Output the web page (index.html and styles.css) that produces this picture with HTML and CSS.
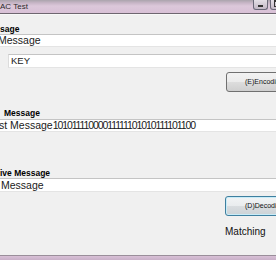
FILE: index.html
```html
<!DOCTYPE html>
<html>
<head>
<meta charset="utf-8">
<link rel="stylesheet" href="styles.css">
</head>
<body>
<div class="window">
  <div class="titlebar">
    <span class="title">AC Test</span>
    <div class="caption">
      <span class="cbtn min"></span>
      <span class="cbtn max"></span>
    </div>
  </div>
  <div class="client">
    <div class="label l1">sage</div>
    <div class="tb tb1">Message</div>
    <div class="tb key">KEY</div>
    <div class="btn enc">(E)Encoding</div>
    <div class="label l2">Message</div>
    <div class="tb tb3">st Message<span class="bits">10101111000011111101010111101100</span></div>
    <div class="label l3">ive Message</div>
    <div class="tb tb4">Message</div>
    <div class="btn dec">(D)Decoding</div>
    <div class="status">Matching</div>
  </div>
  <div class="frame-bottom"></div>
</div>
</body>
</html>
```
FILE: styles.css
```css
html, body {
  margin: 0;
  padding: 0;
}
body {
  width: 276px;
  height: 260px;
  overflow: hidden;
  background: #f0f0f0;
  font-family: "Liberation Sans", Arial, sans-serif;
  color: #111;
}
.window {
  display: flex;
  flex-direction: column;
  height: 260px;
}
.titlebar {
  height: 13px;
  flex: none;
  border-bottom: 1px solid #6e6670;
  background: linear-gradient(#aaa4ac 0, #c8b6c7 3px, #dcc8da 6px, #d8c0d6 100%);
  display: flex;
  justify-content: space-between;
  align-items: flex-start;
}
.title {
  font-size: 8px;
  line-height: 14px;
  color: #2a2a2a;
}
.caption {
  display: flex;
  gap: 2px;
  margin-right: -8px;
}
.cbtn {
  height: 10px;
  box-sizing: border-box;
  border: 1px solid #6a6878;
  border-top: 0;
  border-radius: 0 0 3px 3px;
  background: linear-gradient(#e4dfe6, #c3b8c6);
  display: flex;
  justify-content: center;
  align-items: flex-end;
}
.min {
  width: 15px;
  padding-bottom: 2px;
}
.min::after {
  content: "";
  width: 5px;
  height: 2px;
  background: #333;
}
.max {
  width: 14px;
  justify-content: flex-start;
  padding: 0 0 2px 3px;
}
.max::after {
  content: "";
  width: 5px;
  height: 4px;
  border: 1px solid #333;
  border-top-width: 2px;
}
.client {
  flex: 1;
  display: flex;
  flex-direction: column;
  overflow: hidden;
  background: #f0f0f0;
  border-top: 1px solid #f8f8f8;
}
.label {
  font-weight: bold;
  font-size: 8.5px;
  line-height: 10px;
  color: #000;
  white-space: nowrap;
}
.l1 { margin-top: 9px; }
.l2 { margin-top: 16px; padding-left: 4px; }
.l3 { margin-top: 36px; }
.tb {
  height: 13px;
  box-sizing: border-box;
  background: #fff;
  border-top: 1px solid #c4c4c4;
  border-bottom: 1px solid #e4e4e4;
  font-size: 10.5px;
  line-height: 11px;
  white-space: nowrap;
  overflow: hidden;
  color: #1a1a1a;
}
.tb1 { text-indent: -2px; }
.key {
  margin-top: 7px;
  margin-left: 8px;
  height: 14px;
  padding-left: 2px;
  font-size: 9.5px;
  line-height: 12px;
  border-left: 1px solid #dcdcdc;
}
.tb3 { margin-top: 1px; text-indent: -1px; }
.bits { letter-spacing: -1.1px; }
.tb4 { height: 14px; line-height: 12px; text-indent: 1px; }
.btn {
  flex: none;
  margin-left: 226px;
  width: 72px;
  height: 20px;
  box-sizing: border-box;
  border: 1px solid #707070;
  border-radius: 3px;
  background: linear-gradient(#f2f2f2 0, #ebebeb 50%, #dddddd 50%, #cfcfcf 100%);
  font-size: 7px;
  line-height: 18px;
  padding-left: 18px;
  white-space: nowrap;
  color: #111;
}
.enc { margin-top: 4px; }
.dec {
  margin-top: 4px;
  margin-left: 225px;
  height: 20px;
  border-color: #3f7f9f;
  box-shadow: inset 0 0 0 1px #c8ecf8;
  background: linear-gradient(#f2f4f5 0, #e9ecee 50%, #d9dde0 50%, #ccd2d6 100%);
  padding-left: 19px;
}
.status {
  margin-top: 10px;
  margin-left: 225px;
  font-size: 10px;
  line-height: 12px;
  color: #111;
  white-space: nowrap;
}
.frame-bottom {
  flex: none;
  height: 4px;
  border-top: 1px solid #9a8e9a;
  background: linear-gradient(#d8c0d6, #c9b0c8);
}
```
